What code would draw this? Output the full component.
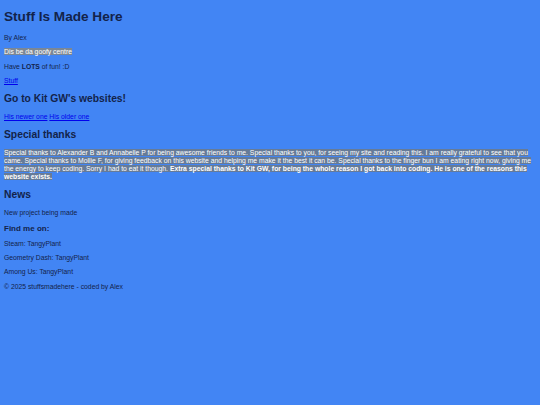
import React from 'react'

export default function App() {
    const p = 'text-[6.8px] leading-[8px] my-[6.3px]'
    const h2 = 'text-[10.3px] leading-[12px] font-bold my-[8px]'
    return (
        <div className="min-h-[405px] bg-[#4285f4] text-[#13234a] px-[4px] py-px font-['Liberation_Sans',Arial,sans-serif]">
            <h1 className="text-[13.6px] leading-[16px] font-bold mt-[8px] mb-[9px]">Stuff Is Made Here</h1>
            <p className={p}>By Alex</p>
            <p className={p}>
                <span className="bg-[#7b8795] text-white">Dis be da goofy centre</span>
            </p>
            <p className={p}>
                Have <b>LOTS</b> of fun! :D
            </p>
            <p className={p}>
                <a href="#" className="text-[#0000ee] underline">Stuff</a>
            </p>

            <h2 className={h2}>Go to Kit GW's websites!</h2>
            <p className={p}>
                <a href="#" className="text-[#0000ee] underline">His newer one</a>{' '}
                <a href="#" className="text-[#0000ee] underline">His older one</a>
            </p>

            <h2 className={h2}>Special thanks</h2>
            <p className={p}>
                <span className="bg-[#667b98] text-white">
                    Special thanks to Alexander B and Annabelle P for being awesome friends to me. Special thanks to you, for seeing my site and reading this. I am really grateful to see that you came. Special thanks to Mollie F, for giving feedback on this website and helping me make it the best it can be. Special thanks to the finger bun I am eating right now, giving me the energy to keep coding. Sorry I had to eat it though.{' '}
                    <b>Extra special thanks to Kit GW, for being the whole reason I got back into coding. He is one of the reasons this website exists.</b>
                </span>
            </p>

            <h2 className={h2}>News</h2>
            <p className={p}>New project being made</p>

            <h3 className="text-[8px] leading-[9px] font-bold my-[7px]">Find me on:</h3>
            <p className={p}>Steam: TangyPlant</p>
            <p className={p}>Geometry Dash: TangyPlant</p>
            <p className={p}>Among Us: TangyPlant</p>
            <p className={p}>© 2025 stuffsmadehere - coded by Alex</p>
        </div>
    )
}
